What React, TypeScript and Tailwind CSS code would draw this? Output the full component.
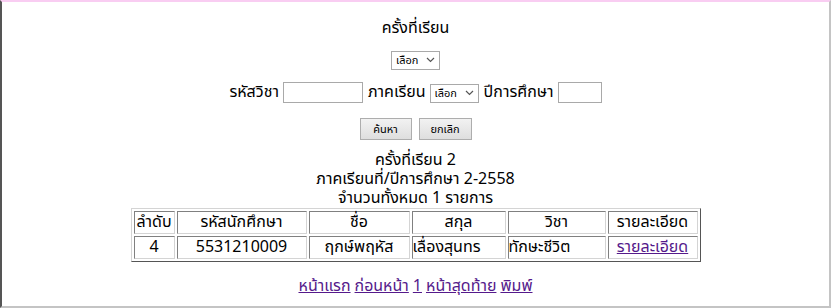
const thai = "font-['Tahoma','Noto_Sans_Thai','Loma','Garuda','Noto_Sans',sans-serif]";

function Chevron() {
  return (
    <svg
      className="pointer-events-none absolute right-[5px] top-1/2 -translate-y-1/2"
      width="9"
      height="6"
      viewBox="0 0 9 6"
    >
      <path d="M1 1 L4.5 4.5 L8 1" fill="none" stroke="#555" strokeWidth="1.2" />
    </svg>
  );
}

function Select({ width }: { width: string }) {
  return (
    <div className={`relative inline-block h-[19px] ${width}`}>
      <select
        className={`h-full w-full appearance-none border border-[#a9a9a9] bg-white pl-[4px] text-[11px] leading-none text-black ${thai}`}
        defaultValue=""
      >
        <option value="">เลือก</option>
      </select>
      <Chevron />
    </div>
  );
}

function Btn({ label, width }: { label: string; width: string }) {
  return (
    <button
      className={`h-[22px] ${width} border border-[#adadad] bg-gradient-to-b from-[#f2f2f2] to-[#dedede] text-[11px] text-black ${thai}`}
    >
      {label}
    </button>
  );
}

const headers = ['ลำดับ', 'รหัสนักศึกษา', 'ชื่อ', 'สกุล', 'วิชา', 'รายละเอียด'];
const widths = ['w-[41px]', 'w-[130px]', 'w-[101px]', 'w-[94px]', 'w-[98px]', 'w-[90px]'];

const cell = 'h-[23px] border border-t-[#808080] border-l-[#808080] border-b-[#d4d4d4] border-r-[#d4d4d4] p-0';

export default function App() {
  return (
    <div
      className={`h-[308px] w-[831px] overflow-hidden border-l-2 border-t-2 border-r-2 border-b-2 border-l-[#555555] border-t-[#f9cdf2] border-r-[#c4c4c4] border-b-[#c4c4c4] bg-white text-black ${thai}`}
    >
      <div className="flex flex-col items-center pt-[17px] text-[16px] leading-[19px]">
        <div>ครั้งที่เรียน</div>

        <div className="mt-[12px]">
          <Select width="w-[49px]" />
        </div>

        <div className="mt-[13px] flex items-center gap-[4px]">
          <span>รหัสวิชา</span>
          <input className="h-[21px] w-[80px] border border-[#a9a9a9] bg-white" />
          <span className="ml-[1px]">ภาคเรียน</span>
          <Select width="w-[49px]" />
          <span className="ml-[1px]">ปีการศึกษา</span>
          <input className="h-[21px] w-[44px] border border-[#a9a9a9] bg-white" />
        </div>

        <div className="mt-[15px] flex gap-[7px]">
          <Btn label="ค้นหา" width="w-[52px]" />
          <Btn label="ยกเลิก" width="w-[53px]" />
        </div>

        <div className="mt-[11px] flex flex-col items-center leading-[19px]">
          <div>ครั้งที่เรียน 2</div>
          <div>ภาคเรียนที่/ปีการศึกษา 2-2558</div>
          <div>จำนวนทั้งหมด 1 รายการ</div>
        </div>

        <table className="border-separate border-spacing-[2px] border border-t-[#d4d4d4] border-l-[#d4d4d4] border-b-[#555555] border-r-[#555555] text-[16px]">
          <tbody>
            <tr>
              {headers.map((h, i) => (
                <td key={h} className={`${cell} ${widths[i]} text-center`}>
                  {h}
                </td>
              ))}
            </tr>
            <tr>
              <td className={`${cell} text-center`}>4</td>
              <td className={`${cell} text-center`}>5531210009</td>
              <td className={`${cell} text-center`}>ฤกษ์พฤหัส</td>
              <td className={`${cell} text-left`}>เลื่องสุนทร</td>
              <td className={`${cell} text-left`}>ทักษะชีวิต</td>
              <td className={`${cell} text-center`}>
                <a href="#" className="text-[#551a8b] underline">
                  รายละเอียด
                </a>
              </td>
            </tr>
          </tbody>
        </table>

        <div className="mt-[15px] flex gap-[4px]">
          {['หน้าแรก', 'ก่อนหน้า', '1', 'หน้าสุดท้าย', 'พิมพ์'].map((t) => (
            <a key={t} href="#" className="text-[#551a8b] underline">
              {t}
            </a>
          ))}
        </div>
      </div>
    </div>
  );
}
